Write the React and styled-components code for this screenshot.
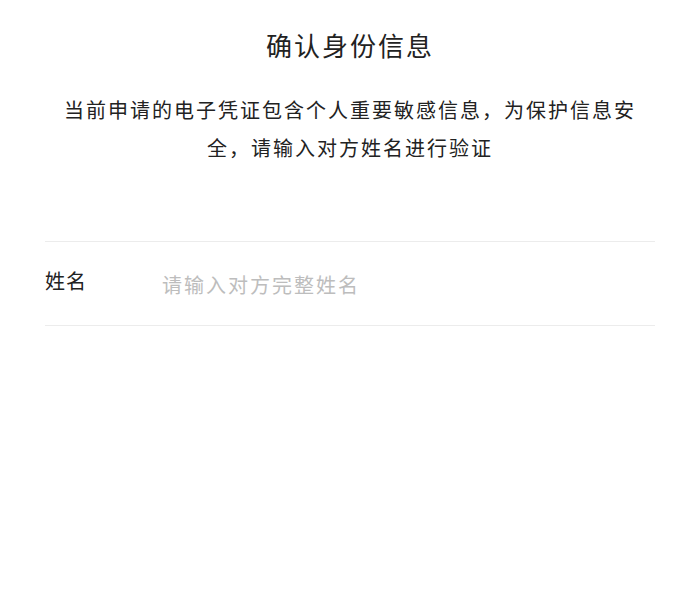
import React from "react";
import styled, { createGlobalStyle } from "styled-components";

const GlobalStyle = createGlobalStyle`
  body {
    margin: 0;
    background: #ffffff;
    font-family: "Noto Sans CJK SC", "Noto Sans", sans-serif;
    color: #222222;
  }
`;

export default function App() {
  return (
    <>
      <GlobalStyle />
      <Page>
        <Title>确认身份信息</Title>
        <Notice>
          当前申请的电子凭证包含个人重要敏感信息，为保护信息安全，请输入对方姓名进行验证
        </Notice>
        <Form>
          <Field>
            <Label>姓名</Label>
            <NameInput placeholder="请输入对方完整姓名" />
          </Field>
        </Form>
      </Page>
    </>
  );
}

const Page = styled.div`
  display: flex;
  flex-direction: column;
  align-items: center;

  padding: 25px 45px 0;
`;

const Title = styled.h1`
  margin: 0;

  font-size: 26px;
  font-weight: 400;
  line-height: 40px;
  letter-spacing: 2px;
`;

const Notice = styled.p`
  width: 580px;
  margin: 26px 0 0;

  font-size: 20px;
  line-height: 38px;
  letter-spacing: 2px;
  text-align: center;
`;

const Form = styled.div`
  align-self: stretch;
  margin-top: 74px;
`;

const Field = styled.label`
  display: flex;
  align-items: center;

  height: 83px;

  border-top: 1px solid #ececec;
  border-bottom: 1px solid #ececec;
`;

const Label = styled.span`
  width: 117px;
  flex-shrink: 0;
  margin-top: -6px;

  font-size: 20px;
  letter-spacing: 1px;
`;

const NameInput = styled.input`
  flex: 1;
  margin-top: 2px;
  padding: 0;

  border: none;
  outline: none;
  background: transparent;

  font-family: inherit;
  font-size: 20px;
  letter-spacing: 2px;
  color: #222222;

  &::placeholder {
    color: #bdbdbd;
  }
`;
